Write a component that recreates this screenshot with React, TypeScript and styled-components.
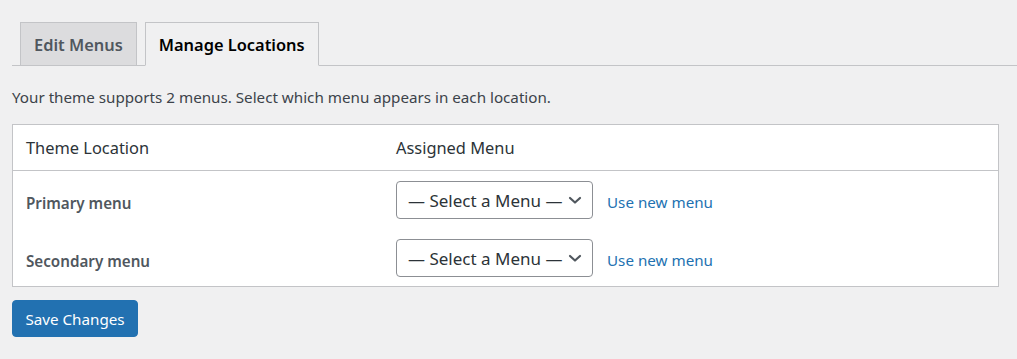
import React from 'react';
import styled, { createGlobalStyle } from 'styled-components';

const GlobalStyle = createGlobalStyle`
  html, body {
    margin: 0;
    padding: 0;
    background: #f0f0f1;
  }
  body {
    font-family: 'Noto Sans', 'Open Sans', sans-serif;
    color: #3c434a;
  }
`;

export const Page = styled.div`
  padding: 22px 0 0 12px;
`;

export const TabBar = styled.nav`
  display: flex;
  gap: 8px;
  padding-left: 8px;
  border-bottom: 1px solid #c3c4c7;
`;

export const Tab = styled.a<{ $active?: boolean }>`
  display: flex;
  align-items: center;
  height: 42px;
  padding: 0 13px;
  margin-bottom: -1px;
  border: 1px solid #c3c4c7;
  border-bottom-color: ${({ $active }) => ($active ? '#f0f0f1' : '#c3c4c7')};
  background: ${({ $active }) => ($active ? '#f0f0f1' : '#dcdcde')};
  color: ${({ $active }) => ($active ? '#000' : '#50575e')};
  font-size: 16.4px;
  font-weight: 600;
  text-decoration: none;
  cursor: pointer;
`;

export const Description = styled.p`
  margin: 20px 0 0;
  font-size: 15.2px;
  line-height: 22px;
`;

export const Table = styled.table`
  margin: 16px 18px 0 0;
  width: calc(100% - 18px);
  table-layout: fixed;
  border-collapse: collapse;
  background: #fff;
  border: 1px solid #c3c4c7;
`;

export const HeadCell = styled.th<{ $width?: string }>`
  width: ${({ $width }) => $width || 'auto'};
  height: 45px;
  padding: 0 13px;
  text-align: left;
  font-size: 16.4px;
  font-weight: 400;
  color: #2c3338;
  border-bottom: 1px solid #c3c4c7;
`;

export const LabelCell = styled.th`
  padding: 20px 13px 0;
  text-align: left;
  vertical-align: top;
  font-size: 15.2px;
  font-weight: 600;
  line-height: 24px;
  color: #50575e;
`;

export const FieldCell = styled.td<{ $last?: boolean }>`
  padding: 10px 13px ${({ $last }) => ($last ? '9px' : '10px')};
  vertical-align: top;
`;

export const Field = styled.div`
  display: flex;
  align-items: center;
  gap: 14px;
`;

export const SelectBox = styled.div`
  position: relative;
  display: flex;
  align-items: center;
  box-sizing: border-box;
  width: 197px;
  height: 38px;
  padding: 0 30px 0 11px;
  border: 1px solid #8c8f94;
  border-radius: 4px;
  background: #fff;
  font-size: 17px;
  color: #2c3338;
  white-space: nowrap;
  cursor: pointer;

  svg {
    position: absolute;
    right: 9px;
    top: 50%;
    transform: translateY(-50%);
  }
`;

export const Link = styled.a`
  padding-top: 4px;
  color: #2271b1;
  font-size: 15.2px;
  text-decoration: none;
  cursor: pointer;
`;

export const SaveButton = styled.button`
  margin-top: 13px;
  height: 37px;
  width: 126px;
  padding: 0;
  border: 1px solid #2271b1;
  border-radius: 4px;
  background: #2271b1;
  color: #fff;
  font-family: inherit;
  font-size: 15.2px;
  cursor: pointer;
`;

const Chevron = () => (
  <svg width="16" height="16" viewBox="0 0 16 16" fill="none">
    <path d="M3 6l5 4.5L13 6" stroke="#50575e" strokeWidth="2.2" strokeLinecap="round" strokeLinejoin="round" />
  </svg>
);

const locations = ['Primary menu', 'Secondary menu'];

const App: React.FC = () => (
  <>
    <GlobalStyle />
    <Page>
      <TabBar>
        <Tab>Edit Menus</Tab>
        <Tab $active>Manage Locations</Tab>
      </TabBar>
      <Description>
        Your theme supports 2 menus. Select which menu appears in each location.
      </Description>
      <Table>
        <thead>
          <tr>
            <HeadCell $width="344px">Theme Location</HeadCell>
            <HeadCell>Assigned Menu</HeadCell>
          </tr>
        </thead>
        <tbody>
          {locations.map((name, i) => (
            <tr key={name}>
              <LabelCell>{name}</LabelCell>
              <FieldCell $last={i === locations.length - 1}>
                <Field>
                  <SelectBox>
                    — Select a Menu —
                    <Chevron />
                  </SelectBox>
                  <Link>Use new menu</Link>
                </Field>
              </FieldCell>
            </tr>
          ))}
        </tbody>
      </Table>
      <SaveButton>Save Changes</SaveButton>
    </Page>
  </>
);

export default App;
